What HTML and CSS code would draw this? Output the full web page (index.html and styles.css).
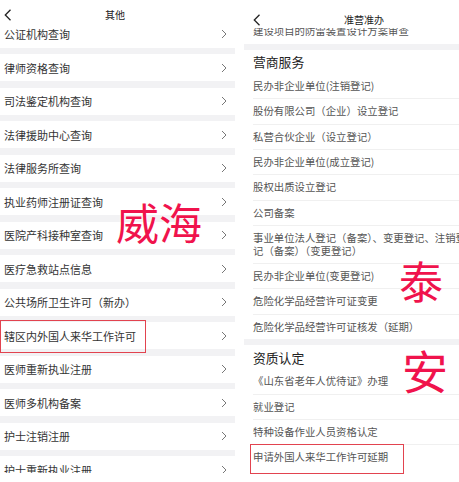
FILE: index.html
```html
<!DOCTYPE html>
<html lang="zh-CN">
<head>
  <meta charset="UTF-8">
  <meta name="viewport" content="width=device-width, initial-scale=1.0">
  <title>其他 / 准营准办</title>
  <link rel="stylesheet" href="styles.css">
</head>
<body>
  <div class="screens">
    <!-- 左边：其他 -->
    <section class="phone phone-left">
      <header class="topbar">
        <span class="back"><svg width="8" height="12" viewBox="0 0 8 12"><polyline points="6.5,0.8 1.3,6 6.5,11.2" fill="none" stroke="#222" stroke-width="1.3"/></svg></span>
        <h1>其他</h1>
        <span></span>
      </header>
      <div class="viewport">
        <ul class="menu">
          <li class="menu-row"><span>公证机构查询</span><svg class="chev" width="6" height="10" viewBox="0 0 6 10"><polyline points="1,1 5,5 1,9" fill="none" stroke="#777" stroke-width="1"/></svg></li>
          <li class="menu-row"><span>律师资格查询</span><svg class="chev" width="6" height="10" viewBox="0 0 6 10"><polyline points="1,1 5,5 1,9" fill="none" stroke="#777" stroke-width="1"/></svg></li>
          <li class="menu-row"><span>司法鉴定机构查询</span><svg class="chev" width="6" height="10" viewBox="0 0 6 10"><polyline points="1,1 5,5 1,9" fill="none" stroke="#777" stroke-width="1"/></svg></li>
          <li class="menu-row"><span>法律援助中心查询</span><svg class="chev" width="6" height="10" viewBox="0 0 6 10"><polyline points="1,1 5,5 1,9" fill="none" stroke="#777" stroke-width="1"/></svg></li>
          <li class="menu-row"><span>法律服务所查询</span><svg class="chev" width="6" height="10" viewBox="0 0 6 10"><polyline points="1,1 5,5 1,9" fill="none" stroke="#777" stroke-width="1"/></svg></li>
          <li class="menu-row"><span>执业药师注册证查询</span><svg class="chev" width="6" height="10" viewBox="0 0 6 10"><polyline points="1,1 5,5 1,9" fill="none" stroke="#777" stroke-width="1"/></svg></li>
          <li class="menu-row"><span>医院产科接种室查询</span><svg class="chev" width="6" height="10" viewBox="0 0 6 10"><polyline points="1,1 5,5 1,9" fill="none" stroke="#777" stroke-width="1"/></svg></li>
          <li class="menu-row"><span>医疗急救站点信息</span><svg class="chev" width="6" height="10" viewBox="0 0 6 10"><polyline points="1,1 5,5 1,9" fill="none" stroke="#777" stroke-width="1"/></svg></li>
          <li class="menu-row"><span>公共场所卫生许可（新办）</span><svg class="chev" width="6" height="10" viewBox="0 0 6 10"><polyline points="1,1 5,5 1,9" fill="none" stroke="#777" stroke-width="1"/></svg></li>
          <li class="menu-row marked"><span>辖区内外国人来华工作许可</span><svg class="chev" width="6" height="10" viewBox="0 0 6 10"><polyline points="1,1 5,5 1,9" fill="none" stroke="#777" stroke-width="1"/></svg></li>
          <li class="menu-row"><span>医师重新执业注册</span><svg class="chev" width="6" height="10" viewBox="0 0 6 10"><polyline points="1,1 5,5 1,9" fill="none" stroke="#777" stroke-width="1"/></svg></li>
          <li class="menu-row"><span>医师多机构备案</span><svg class="chev" width="6" height="10" viewBox="0 0 6 10"><polyline points="1,1 5,5 1,9" fill="none" stroke="#777" stroke-width="1"/></svg></li>
          <li class="menu-row"><span>护士注销注册</span><svg class="chev" width="6" height="10" viewBox="0 0 6 10"><polyline points="1,1 5,5 1,9" fill="none" stroke="#777" stroke-width="1"/></svg></li>
          <li class="menu-row"><span>护士重新执业注册</span><svg class="chev" width="6" height="10" viewBox="0 0 6 10"><polyline points="1,1 5,5 1,9" fill="none" stroke="#777" stroke-width="1"/></svg></li>
        </ul>
      </div>
      <div class="footer"></div>
    </section>

    <!-- 右边：准营准办 -->
    <section class="phone phone-right">
      <header class="topbar">
        <span class="back"><svg width="8" height="12" viewBox="0 0 8 12"><polyline points="6.5,0.8 1.3,6 6.5,11.2" fill="none" stroke="#222" stroke-width="1.3"/></svg></span>
        <h1>准营准办</h1>
        <span></span>
      </header>
      <div class="viewport">
        <div class="services">
          <ul class="group">
            <li class="item">建设项目的防雷装置设计方案审查</li>
          </ul>
          <div class="band"></div>
          <h2 class="group-title">营商服务</h2>
          <ul class="group">
            <li class="item">民办非企业单位(注销登记)</li>
            <li class="item">股份有限公司（企业）设立登记</li>
            <li class="item">私营合伙企业（设立登记）</li>
            <li class="item">民办非企业单位(成立登记)</li>
            <li class="item">股权出质设立登记</li>
            <li class="item">公司备案</li>
            <li class="item">事业单位法人登记（备案）、变更登记、注销登<br>记（备案）（变更登记）</li>
            <li class="item">民办非企业单位(变更登记)</li>
            <li class="item">危险化学品经营许可证变更</li>
            <li class="item">危险化学品经营许可证核发（延期）</li>
          </ul>
          <div class="band"></div>
          <h2 class="group-title">资质认定</h2>
          <ul class="group">
            <li class="item">《山东省老年人优待证》办理</li>
            <li class="item">就业登记</li>
            <li class="item">特种设备作业人员资格认定</li>
            <li class="item marked">申请外国人来华工作许可延期</li>
          </ul>
        </div>
      </div>
    </section>
  </div>

  <div class="stamp stamp-weihai">威海</div>
  <div class="stamp stamp-tai">泰</div>
  <div class="stamp stamp-an">安</div>
</body>
</html>
```

FILE: styles.css
```css
* {
  margin: 0;
  padding: 0;
  box-sizing: border-box;
}
html, body {
  width: 100%;
  height: 100%;
  background: #fff;
  overflow: hidden;
}
body {
  position: relative;
  font-family: "Noto Sans CJK SC", "Noto Sans", sans-serif;
}
.screens {
  display: flex;
  gap: 9px;
  margin-left: -5px;
  height: 482px;
}
.phone {
  flex: none;
  width: 240px;
  height: 482px;
  display: flex;
  flex-direction: column;
  overflow: hidden;
  background: #fff;
}

/* 顶部栏 */
.topbar {
  flex: none;
  display: grid;
  grid-template-columns: 40px 1fr 40px;
  align-items: center;
  padding-left: 9px;
  padding-right: 9px;
  background: #fff;
  position: relative;
  z-index: 1;
}
.phone-left .topbar {
  height: 25px;
  padding-top: 5px;
}
.phone-right .topbar {
  height: 28px;
  padding-top: 11px;
}
.topbar h1 {
  font-size: 10px;
  font-weight: 400;
  line-height: 12px;
  color: #222;
  text-align: center;
}
.back svg {
  display: block;
}
.viewport {
  flex: 1;
  overflow: hidden;
}
.footer {
  flex: none;
  height: 9px;
  background: #fff;
}

/* 左边列表 */
.menu {
  list-style: none;
  display: flex;
  flex-direction: column;
  gap: 6.5px;
  margin-top: -4.5px;
  background: #f2f2f4;
}
.menu-row {
  flex: none;
  height: 27px;
  display: flex;
  align-items: center;
  justify-content: space-between;
  padding: 0 8px 0 9px;
  background: #fff;
  font-size: 11px;
  color: #333;
  white-space: nowrap;
  position: relative;
}
.chev {
  display: block;
}
.menu-row.marked::after {
  content: '';
  position: absolute;
  left: 5px;
  top: -2.5px;
  bottom: -3.5px;
  width: 144px;
  border: 1.5px solid #e2434f;
}

/* 右边列表 */
.services {
  margin-top: -8.7px;
}
.group {
  list-style: none;
}
.band {
  height: 6px;
  background: #f2f2f4;
}
.group-title {
  height: 24px;
  display: flex;
  align-items: center;
  padding-left: 9px;
  font-size: 12.8px;
  font-weight: 400;
  color: #222;
}
.item {
  margin-left: 9px;
  padding: 6px 0;
  font-size: 10.4px;
  line-height: 12.4px;
  color: #555;
  white-space: nowrap;
  border-bottom: 1px solid #f0f0f0;
  position: relative;
}
.item:last-child {
  border-bottom: none;
}
.item.marked::after {
  content: '';
  position: absolute;
  left: -3px;
  top: -1px;
  width: 152px;
  height: 28px;
  border: 1.5px solid #e2434f;
}

/* 红色大字 */
.stamp {
  position: absolute;
  color: #f0134c;
  line-height: 1;
  font-weight: 400;
  text-shadow: 0 0 2px #fff, 0 0 2px #fff;
  white-space: nowrap;
}
.stamp-weihai {
  left: 116px;
  top: 200px;
  font-size: 43px;
}
.stamp-tai {
  left: 399px;
  top: 258px;
  font-size: 44px;
}
.stamp-an {
  left: 402px;
  top: 346px;
  font-size: 46px;
}
```
